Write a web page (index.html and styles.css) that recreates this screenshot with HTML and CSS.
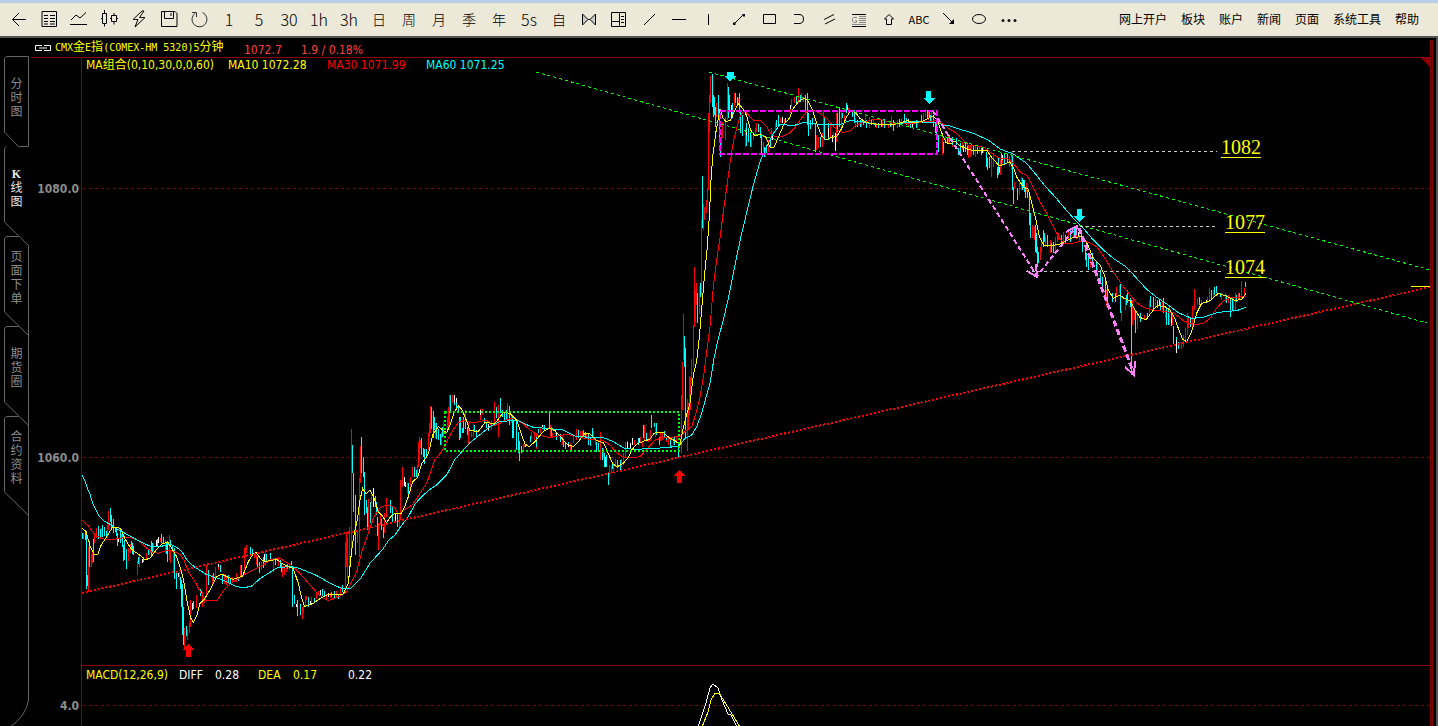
FILE: index.html
```html
<!DOCTYPE html>
<html lang="zh-CN">
<head>
<meta charset="utf-8">
<title>CMX金E指 5分钟</title>
<link rel="stylesheet" href="styles.css">
</head>
<body>
<header class="toolbar">
  <nav class="tools" aria-label="工具">
    <button class="tool" aria-label="返回"><svg class="icon" viewBox="0 0 20 20"><path d="M17 10.500H4M10 4L3.500 10.500L10 17"/></svg></button>
    <button class="tool" aria-label="报价"><svg class="icon" viewBox="0 0 20 20"><path d="M3 2.500h14.500v15H3zM5 6.500h4M11 6.500h5M5 9.500h4M11 9.500h5M5 12.500h4M11 12.500h5M5 15h4M11 15h5"/></svg></button>
    <button class="tool" aria-label="分时"><svg class="icon" viewBox="0 0 20 20"><path d="M2 11L7 6L11 9L17 3.500" stroke-width="1"/><path d="M1 15.500h17"/></svg></button>
    <button class="tool" aria-label="K线"><svg class="icon" viewBox="0 0 20 20"><path d="M3.500 4.500h4v10h-4zM5.500 1v3.500M5.500 14.500v3M12.500 6.500h5v6h-5zM15 4v2.500M15 12.500v3M2 9.500h1M11 9.500h1M18 9.500h1"/></svg></button>
    <button class="tool" aria-label="闪电下单"><svg class="icon" viewBox="0 0 20 20"><path d="M13 2L4 10.500H9L6 18L16 8.500H10.500L15 2Z"/></svg></button>
    <button class="tool" aria-label="保存"><svg class="icon" viewBox="0 0 20 20"><path d="M2.500 2.500H16L18 4.500V17.500H2.500ZM5.500 2.500V9.500H14.500V2.500M12 4v3"/></svg></button>
    <button class="tool" aria-label="刷新"><svg class="icon" viewBox="0 0 20 20"><path d="M13.500 3.500A7.500 7.500 0 1 1 6.500 4M3 3.500H7.500V8" stroke="#333"/></svg></button>
    <button class="tool">1</button><button class="tool">5</button><button class="tool">30</button><button class="tool">1h</button><button class="tool">3h</button>
    <button class="tool cjk">日</button><button class="tool cjk">周</button><button class="tool cjk">月</button><button class="tool cjk">季</button><button class="tool cjk">年</button>
    <button class="tool">5s</button><button class="tool cjk">自</button>
    <button class="tool" aria-label="复盘"><svg class="icon" viewBox="0 0 20 20"><path d="M3.500 5v11L9 10.500ZM16.500 5v11L11 10.500ZM9 10.500h2" fill="#ccc"/></svg></button>
    <button class="tool" aria-label="布局"><svg class="icon" viewBox="0 0 20 20"><path d="M2.500 3.500h14v14h-14zM10.500 3.500v14M2.500 12.500h8M12 7.500h3M12 10.500h3M12 13.500h3"/></svg></button>
    <button class="tool" aria-label="斜线"><svg class="icon" viewBox="0 0 20 20"><path d="M5 16L16 5"/></svg></button>
    <button class="tool" aria-label="水平线"><svg class="icon" viewBox="0 0 20 20"><path d="M3 10.500h14"/></svg></button>
    <button class="tool" aria-label="竖线"><svg class="icon" viewBox="0 0 20 20"><path d="M9.500 5v11"/></svg></button>
    <button class="tool" aria-label="线段"><svg class="icon" viewBox="0 0 20 20"><path d="M5.500 14.500L14.500 5.500"/><path d="M4 14l1-1l2 2l-1 1H4zM13 6l1-1h2v2l-1 1z" fill="#000" stroke="none"/></svg></button>
    <button class="tool" aria-label="矩形"><svg class="icon" viewBox="0 0 20 20"><path d="M4.500 5.500h12v9h-12z"/></svg></button>
    <button class="tool" aria-label="半圆"><svg class="icon" viewBox="0 0 20 20"><path d="M5 5.500h5q4.500 0 4.500 4.500q0 4.500-4.500 4.500H5"/></svg></button>
    <button class="tool" aria-label="平行线"><svg class="icon" viewBox="0 0 20 20"><path d="M5 10.500L15 5.500M6 15L16 10"/></svg></button>
    <button class="tool" aria-label="黄金分割"><svg class="icon" viewBox="0 0 20 20"><path d="M3 5.500h14M3 17.500h14"/><path d="M10 7.500h7M10 9.500h7M10 11.500h7M10 13.500h7M3 15.500h14M8 8.500H4.500L3.500 9.500v3L4.500 13.500H7.500V11.500H6" stroke="#888"/></svg></button>
    <button class="tool" aria-label="箭头标记"><svg class="icon" viewBox="0 0 20 20"><path d="M10 5.500L14.500 10H12.500V15.500H7.500V10H5.500Z"/></svg></button>
    <button class="tool abc">ABC</button>
    <button class="tool" aria-label="箭头线"><svg class="icon" viewBox="0 0 20 20"><path d="M4 4L14 14"/><path d="M15 10v5h-5z" fill="#000" stroke="none"/></svg></button>
    <button class="tool" aria-label="椭圆"><svg class="icon" viewBox="0 0 20 20"><ellipse cx="10" cy="10" rx="6.500" ry="4.500"/></svg></button>
    <button class="tool" aria-label="更多"><svg class="icon" viewBox="0 0 20 20"><g fill="#111" stroke="none"><circle cx="4" cy="11.500" r="1.500"/><circle cx="10" cy="11.500" r="1.500"/><circle cx="16" cy="11.500" r="1.500"/></g></svg></button>
  </nav>
  <nav class="menu" aria-label="菜单">
    <button>网上开户</button><button>板块</button><button>账户</button><button>新闻</button><button>页面</button><button>系统工具</button><button>帮助</button>
  </nav>
</header>
<div class="workspace">
  <nav class="tabs" aria-label="视图">
    <svg class="tabs-outline" viewBox="0 38 29 688"><path d="M28.500 56.500H6.500L4.500 58.500V132L18.500 146.500H28.500V56.500M6.500 146.500L4.500 148.500V222L28.500 245.500V700Q26 716 10 727M18.500 236.500H6.500L4.500 238.500V312L28.500 335.500M18.500 326.500H6.500L4.500 328.500V402L28.500 425.500M18.500 416.500H6.500L4.500 418.500V492L28.500 515.500"/></svg>
    <button class="tab"><span>分</span><span>时</span><span>图</span></button>
    <button class="tab active"><span class="latin">K</span><span>线</span><span>图</span></button>
    <button class="tab"><span>页</span><span>面</span><span>下</span><span>单</span></button>
    <button class="tab"><span>期</span><span>货</span><span>圈</span></button>
    <button class="tab"><span>合</span><span>约</span><span>资</span><span>料</span></button>
  </nav>
  <main class="chart">
    <div class="quote">
      <svg class="link-icon" viewBox="0 0 16 6"><path d="M7 .500H.500V5.500H7M9 .500H15.500V5.500H9M4 3H12"/></svg>
      <h1 class="contract">CMX<span>金</span>E<span>指</span>(COMEX-HM 5320)5<span>分钟</span></h1>
      <span class="last">1072.7</span><span class="change">1.9 / 0.18%</span>
    </div>
    <div class="legend ma"><span class="yellow">MA组合(0,10,30,0,0,60)</span><span class="yellow">MA10 1072.28</span><span class="red">MA30 1071.99</span><span class="cyan">MA60 1071.25</span></div>
    <svg class="plot" viewBox="29 72 1401 593">
      <g class="axis"><text x="79" y="193">1080.0</text><text x="79" y="462">1060.0</text></g>
      <path class="frame" d="M81.500 72V665"/>
      <path class="grid" d="M83 188.500H1430M83 457.500H1430"/>

      <g class="bars" transform="translate(80 460) scale(.33333333)">
        <path class="down" d="M8 219V236M15 210V240M20 214V386M23 345V378M29 243V320M40 238V305M56 198V238M62 208V235M68 196V230M74 202V228M80 212V232M91 145V185M95 165V205M101 178V220M107 200V216M110 206V228M113 220V258M122 213V248M128 220V262M131 256V302M134 240V300M140 268V326M155 242V268M158 250V282M161 258V286M176 290V312M190 292V305M205 268V285M214 244V284M218 250V275M232 236V258M245 222V248M250 232V250M260 250V282M263 244V305M270 240V262M276 254V272M284 265V356M290 336V386M302 350V386M304 360V440M307 372V525M310 440V555M320 498V528M341 424V448M362 388V408M386 330V374M401 340V362M422 316V336M428 345V372M446 345V368M452 354V372M476 350V362M484 316V350M512 262V288M518 268V286M533 290V320M538 306V340M550 290V325M560 282V305M572 280V304M586 295V315M600 300V324M604 308V336M622 312V328M635 302V324M637 320V442M644 404V432M652 420V468M662 432V464M686 410V440M704 414V428M728 386V408M734 392V408M755 395V412M764 394V416M776 402V418M787 374V396"/>
        <path class="up" d="M11 220V238M26 260V395M35 282V320M38 270V310M44 218V250M50 205V235M65 205V232M83 196V234M86 154V210M125 222V240M146 264V304M152 252V280M172 304V345M178 286V320M200 280V300M208 266V282M220 250V272M240 234V246M257 240V280M268 225V300M271 270V308M280 268V340M298 335V360M313 504V568M323 510V540M328 486V518M332 420V500M350 406V445M366 396V440M372 414V430M380 316V405M397 345V375M407 322V350M416 316V330M434 342V372M440 352V376M458 350V370M470 338V365M480 315V355M493 265V345M496 262V290M499 255V280M524 280V295M530 286V314M545 305V330M555 275V318M580 295V335M596 290V318M607 318V350M612 318V344M618 318V335M628 312V330M667 440V478M670 425V460M675 408V440M680 408V420M695 410V432M710 398V416M716 392V405M740 402V418M750 398V414M770 392V410M782 380V405M796 245V400M799 215V300M803 238V355M808 200V296"/>
        <path class="flat" d="M114 234V246M188 298V308M230 240V258M236 232V248M262 258V278M296 340V350M337 428V450M364 392V400M416 312V320M554 282V305M648 432V440M690 422V436M722 390V404M746 400V412"/>
      </g>
      <g class="bars" transform="translate(330 370) scale(.33333333)">
        <path class="up" d="M49 485V590M53 505V560M58 470V600M65 178V540M83 480V520M87 325V560M91 228V340M116 388V480M125 370V400M145 460V540M150 430V465M163 430V490M168 395V440M170 384V410M207 435V480M210 412V450M212 330V415M218 290V350M232 340V368M242 320V365M247 290V322M262 285V320M265 215V290M268 200V270M271 210V235M295 190V240M299 160V200M302 108V190M316 160V205M334 185V225M340 155V200M352 140V185M355 110V170M358 76V180M368 76V98M406 120V160M416 158V222M424 185V202M430 158V200M450 118V150M457 116V135M485 150V180M494 96V160M506 105V202M532 98V150M545 138V160M579 222V242M584 212V232M605 185V208M612 190V210M618 190V238M632 170V190M640 165V180M660 165V205M668 190V205M676 186V200M696 198V225M722 220V240M730 195V220M738 178V210M752 182V200M758 182V205M770 190V208M790 182V210M795 205V225M812 186V270M820 235V265M839 285V320M845 285V310M851 275V305M857 268V290M875 268V290M880 250V285M886 215V265M893 212V235M914 210V225M930 200V220M936 215V232M943 165V212M955 205V215M962 180V212M976 170V200M990 185V212M998 190V210M1008 202V215M1015 205V225M1022 205V235M1030 205V225M1040 200V215"/>
        <path class="down" d="M68 225V310M70 310V425M75 375V555M95 202V310M100 262V320M103 305V435M108 390V430M113 410V480M121 395V460M135 378V410M139 395V435M142 440V498M154 448V480M160 470V505M180 390V430M186 410V455M203 432V470M235 340V378M253 292V320M259 300V322M275 205V255M280 235V262M284 238V282M289 236V262M305 112V178M311 124V205M314 140V180M320 160V208M326 178V210M331 192V226M337 170V200M362 76V130M374 80V105M380 90V118M385 108V130M388 140V210M392 140V205M397 175V190M401 140V190M407 155V178M412 170V195M434 165V185M440 180V202M462 145V160M470 155V175M476 165V182M500 110V145M511 85V130M517 120V140M522 125V152M528 120V150M538 108V165M548 135V205M551 150V205M558 150V240M565 185V248M568 212V272M573 228V248M600 198V215M620 200V230M626 178V190M644 165V180M657 128V175M663 170V200M680 190V210M690 192V215M700 210V230M707 218V238M716 215V230M725 225V245M744 180V205M760 180V195M767 185V208M774 190V225M782 200V228M788 175V205M799 215V245M805 220V245M817 235V270M824 248V290M828 255V290M830 268V292M836 310V345M848 280V298M863 270V295M870 270V300M925 205V225M940 165V205M950 190V212M965 136V175M972 160V170M980 160V195M987 200V225M1002 182V202M1010 200V210M1022 210V235M1034 200V225M1045 220V262"/>
        <path class="flat" d="M130 355V410M197 430V455M222 322V348M227 335V350M372 76V95M378 85V100M450 120V135M474 162V180M586 222V230M638 165V172M680 188V196M716 222V232M825 262V290M892 215V235M902 220V235M908 205V225M927 205V220"/>
      </g>
      <g class="bars" transform="translate(660 60) scale(.33333333)">
        <path class="up" d="M64 1005V1180M67 905V1050M70 762V900M82 1018V1172M85 1030V1110M88 948V1065M91 950V1050M94 898V960M100 795V920M103 622V800M106 692V785M109 668V735M118 678V762M124 480V705M131 432V510M133 440V480M140 420V460M143 385V430M145 160V390M148 105V215M151 48V130M170 130V170M184 215V265M187 185V235M196 170V240M202 68V180M220 150V165M224 98V140M235 115V135M256 205V262M274 225V260M280 215V240M285 205V225M290 190V215M310 245V275M316 265V292M325 240V275M335 205V240M345 190V215M362 175V190M372 178V192M390 135V160M395 118V140M404 110V130M415 85V130M424 100V120M430 110V125M450 180V200M470 225V270M475 230V265M486 220V262M491 150V235M510 185V235M520 215V235M530 160V245M545 150V205M552 165V185M566 145V158M585 175V205M605 180V200M615 165V190M628 172V205M640 178V195M650 188V205M668 185V200M684 195V205M695 168V200M712 180V205M725 175V195M745 185V200M760 182V196M772 180V200M790 160V190M796 148V170M806 150V180M815 150V185M836 250V275M847 235V285M856 228V250M866 225V248"/>
        <path class="down" d="M55 1150V1190M73 828V920M76 865V1135M112 700V788M121 668V712M127 348V505M157 42V140M160 105V170M163 110V165M166 140V200M175 105V178M178 150V240M181 240V292M205 82V175M209 105V150M218 130V175M227 100V130M232 110V135M238 98V160M242 150V220M247 165V228M260 190V258M265 205V245M272 215V260M294 192V215M300 200V235M304 225V278M313 262V292M320 255V280M330 235V262M350 180V200M355 165V195M408 110V135M420 105V125M436 105V150M442 98V195M445 160V228M450 180V208M458 175V195M466 190V275M481 230V260M494 172V240M505 190V240M533 160V215M538 142V200M548 158V175M558 130V160M562 135V150M578 150V172M584 150V190M592 180V200M600 180V200M609 180V195M620 180V205M635 180V195M645 188V200M655 190V205M665 180V200M674 178V205M690 190V200M700 180V212M718 178V200M733 162V185M738 175V195M750 190V205M768 180V205M785 165V190M802 150V175M808 152V170M812 165V185M820 168V200M825 185V220M830 190V240M834 225V275M850 245V280M862 230V250M868 225V245"/>
        <path class="flat" d="M214 135V170M260 210V225M337 222V240M368 172V188M377 175V185M390 135V148M505 205V230M518 225V245M526 220V272M562 140V150M744 178V190M757 185V200"/>
      </g>
      <g class="bars" transform="translate(920 80) scale(.33333333)">
        <path class="up" d="M98 180V200M128 185V210M145 195V235M150 195V230M155 200V222M165 198V232M178 200V218M190 200V220M215 230V292M220 220V260M240 240V285M248 225V250M268 228V260M274 215V270M282 305V325M297 310V345M303 290V330M318 310V335M337 435V475M343 440V480M360 500V540M365 475V515M377 470V500M390 480V520M405 470V515M412 455V485M416 460V480M430 455V495M445 455V480M460 445V470M470 445V478M478 450V482M510 525V560M533 550V595M560 630V680M590 620V650M597 615V640M604 690V722M615 660V690M638 660V735M643 690V720M652 705V748M672 705V720M688 660V700M705 655V685M728 665V690M735 690V715M748 680V735M757 700V735M785 785V808M790 765V800M795 745V785M803 700V765M806 712V745M812 712V740M818 678V740M824 628V690M832 655V675M845 660V670M862 650V670M868 625V665M880 630V650M905 640V660M915 640V665M925 645V668M940 660V695M945 640V690M955 640V660M965 603V660M972 625V645"/>
        <path class="down" d="M96 172V195M108 175V195M115 205V225M122 190V220M135 185V215M142 188V225M160 198V225M173 198V222M185 200V225M198 215V262M203 235V270M207 230V265M232 262V295M235 235V285M245 218V255M252 220V255M262 222V250M276 225V330M280 320V373M292 325V360M308 295V330M312 300V335M317 325V355M321 330V355M328 335V435M332 400V475M347 435V515M350 460V520M353 500V560M356 515V550M370 450V500M374 460V485M382 465V500M395 490V515M400 485V520M425 465V490M435 465V490M450 450V485M464 440V475M485 455V485M488 470V515M495 500V540M500 520V562M505 530V570M518 520V555M528 545V575M542 570V610M548 590V625M555 600V650M562 620V675M578 640V665M585 640V665M600 612V700M618 645V675M623 630V670M630 655V680M635 660V885M646 690V760M660 700V725M682 700V715M692 648V680M700 650V690M712 660V685M722 665V690M730 655V700M738 680V735M745 690V735M754 700V738M761 738V792M768 770V795M775 785V808M812 710V740M838 650V675M874 630V660M884 622V645M888 618V640M900 640V652M918 645V670M930 650V710M937 655V690M950 645V665M958 640V660M977 605V620"/>
        <path class="flat" d="M130 195V215M188 205V218M238 262V280M247 225V240M310 300V325M475 455V470M718 660V675M755 715V730M768 780V818M860 660V668"/>
      </g>

      <g class="lines" transform="translate(80 460) scale(.33333333)">
        <polyline class="up" points="6,180 25,198 45,225 65,236 90,240 130,233 155,233 175,242 200,264 215,276 235,280 265,270 285,276 300,284 312,300 325,335 345,365 360,394 378,420 412,420 430,392 445,376 480,352 500,340 530,324 550,314 575,298 600,296 630,312 650,330 670,352 690,375 710,398 730,414 745,422 780,408 800,396 815,366 830,334 847,270"/>
        <polyline class="down" points="6,45 15,62 21,82 30,103 39,133 48,150 56,166 70,182 90,193 110,206 130,217 150,228 170,239 190,250 215,260 240,260 270,252 290,262 305,274 322,302 345,322 380,344 415,355 440,365 465,378 490,384 515,378 540,356 565,340 590,324 625,320 650,322 680,334 705,344 730,358 755,372 785,385 810,387 825,372 840,358 870,310 908,268"/>
        <polyline class="fast" points="6,205 18,214 30,258 42,282 54,282 62,258 80,230 97,203 112,202 122,206 135,236 150,262 160,272 180,286 195,300 210,294 230,268 248,250 265,248 276,266 290,290 300,320 310,358 322,428 332,474 340,486 352,462 360,430 375,415 390,390 410,350 425,342 440,350 458,358 488,348 505,305 520,280 528,278 545,300 560,304 590,298 605,310 625,320 640,326 655,370 665,415 674,440 700,430 720,416 745,403 790,402 805,370 815,270"/>
      </g>
      <g class="lines" transform="translate(330 370) scale(.33333333)">
        <polyline class="up" points="97,540 107,512 120,475 132,440 148,415 168,405 192,410 205,432 222,420 248,404 270,370 290,340 315,268 335,245 350,215 370,178 385,158 400,152 420,157 440,157 470,150 485,168 510,160 530,148 555,145 575,158 600,180 625,195 655,202 680,198 710,193 745,200 775,208 820,212 840,225 860,248 880,262 905,264 930,260 950,238 975,210 1000,203 1050,200"/>
        <polyline class="down" points="158,538 175,512 195,495 212,470 235,440 255,402 275,380 300,358 320,345 350,315 375,268 400,240 420,218 455,190 480,170 510,155 560,150 580,160 610,172 660,176 700,180 740,200 820,203 850,215 885,236 920,238 970,235 1010,233 1047,228"/>
        <polyline class="fast" points="65,540 72,495 82,450 90,390 98,355 108,372 120,360 130,378 145,425 155,435 170,458 182,440 195,430 212,432 222,415 235,380 248,335 263,322 275,280 290,262 298,240 308,195 325,170 338,180 350,188 360,165 372,128 385,108 395,118 405,140 420,182 445,184 465,158 495,160 520,127 540,130 560,150 575,195 585,222 597,230 615,215 640,184 657,175 675,182 690,198 710,222 730,230 745,215 765,190 780,192 800,212 820,218 835,250 848,282 862,290 880,280 895,262 905,240 920,222 945,212 960,208 972,190 985,187 1000,188 1020,205 1035,212 1050,225"/>
      </g>
      <g class="lines" transform="translate(660 60) scale(.33333333)">
        <polyline class="up" points="60,1130 80,1110 95,1100 108,1060 120,1010 132,940 142,860 150,800 160,680 170,600 182,520 192,440 202,370 210,310 220,245 230,205 240,170 252,152 265,165 280,182 302,182 320,200 335,225 355,233 385,222 400,208 420,180 440,155 460,150 480,160 505,180 530,210 550,217 570,212 590,195 610,188 640,178 665,180 700,190 760,190 800,185 830,182 850,192 870,208"/>
        <polyline class="down" points="57,1158 75,1135 95,1125 110,1100 125,1060 140,1005 150,970 162,895 175,835 190,780 205,715 218,650 230,590 245,520 262,450 280,375 300,305 320,260 340,220 360,193 400,197 430,188 500,195 540,193 570,182 600,184 640,192 700,193 760,185 835,188 850,195 870,198"/>
        <polyline class="fast" points="60,1155 68,1110 78,1070 90,1030 100,945 110,905 118,830 126,735 134,640 142,560 148,470 153,360 158,290 168,215 180,148 188,172 198,185 212,180 222,155 236,130 245,142 255,155 262,175 272,210 285,228 300,222 318,232 330,262 342,262 355,232 372,192 388,175 400,145 415,125 432,115 444,122 455,145 470,190 485,228 498,240 515,232 530,230 545,205 560,170 574,150 588,160 600,175 620,188 660,194 700,193 725,188 740,182 760,188 785,185 805,175 820,168 832,182 845,218 858,248 870,252"/>
      </g>
      <g class="lines" transform="translate(920 80) scale(.33333333)">
        <polyline class="up" points="90,148 105,157 125,175 145,197 170,198 195,204 215,220 240,236 262,236 280,250 300,275 322,288 340,322 360,365 380,400 400,440 415,470 432,490 455,492 475,484 505,486 530,500 548,525 570,560 590,590 610,620 630,645 650,668 670,682 700,690 760,698 790,722 820,735 850,730 870,715 890,685 910,662 930,652 955,652 978,648"/>
        <polyline class="down" points="90,138 120,148 160,160 205,180 240,207 280,222 320,250 345,280 375,318 400,345 430,380 465,420 490,445 520,480 550,510 580,535 620,562 650,595 680,628 710,652 740,672 775,698 815,715 850,712 890,698 920,694 950,692 978,682"/>
        <polyline class="fast" points="90,192 105,183 120,198 145,208 165,213 200,210 215,232 238,258 255,252 268,245 280,262 292,295 310,320 325,328 338,380 348,420 358,470 370,495 390,498 420,492 440,482 460,472 490,470 505,498 520,535 540,555 555,590 565,630 580,655 600,645 612,655 630,662 645,690 660,712 678,720 692,700 712,676 735,680 750,690 762,710 775,745 788,778 800,785 815,755 830,700 845,670 870,662 895,640 918,648 945,662 965,658 978,640"/>
      </g>

      <path class="support" d="M82 593L1430 287"/>
      <path class="channel" d="M709 72L1430 270M536 72L1427 323"/>
      <path class="range-low" d="M445 412H679V451H445Z"/>
      <path class="range-high" d="M720 111H937V154H720Z"/>
      <path class="level" d="M1012 151.500H1217M1080 226.500H1216M1026 271.500H1221"/>
      <g class="wave">
        <path class="thin" d="M933 111L1037 276L1076 227"/>
        <path class="thick" d="M1079 228L1134 374"/>
        <path class="head" d="M1027 271L1037 277L1036 264M1066 232L1077 226L1075 238M1125 367L1134 375L1135 361"/>
      </g>
      <path class="sell" d="M727 72h7v4h3l-7 5l-6-5h3zM926 91h5v7h4l-6 6l-6-6h3zM1077 209h5v7h3l-6 6l-6-6h4z"/>
      <path class="buy" d="M679 470l6 6h-3v7h-5v-7h-4zM188 644l6 6h-3v7h-5v-7h-4z"/>
      <path class="last-mark" d="M1411 286.500H1430"/>
      <g class="targets"><text x="1221" y="154">1082</text><text x="1225" y="229">1077</text><text x="1225" y="274">1074</text><path d="M1221 157.500h40M1225 232.500h40M1225 277.500h40"/></g>
    </svg>
    <section class="macd">
      <div class="legend osc"><span class="yellow">MACD(12,26,9)</span><span>DIFF</span><span>0.28</span><span class="yellow">DEA</span><span class="yellow">0.17</span><span>0.22</span></div>
      <svg class="plot" viewBox="29 684 1401 42">
        <g class="axis"><text x="79" y="710">4.0</text></g>
        <path class="frame" d="M81.500 684V726"/>
        <path class="grid" d="M83 705.500H1430"/>
        <polyline class="diff" points="698,727 702,715 706,703 710,688 713,684 718,688 722,700 728,714 731,715 737,727"/>
        <polyline class="dea" points="702,727 708,712 711,700 715,693 719,693 726,704 732,714 740,727"/>
      </svg>
    </section>
    <svg class="corner" viewBox="0 0 10 10"><path d="M0 0H10V10Z"/></svg>
  </main>
  <aside class="rail"><div class="track"></div></aside>
</div>
</body>
</html>
```
FILE: styles.css
```css
* { box-sizing: border-box; }
body {
  margin: 0;
  background: #000;
  color: #fff;
  font: 12px/14px "DejaVu Sans Condensed", "Noto Sans", "Noto Sans CJK SC", sans-serif;
  overflow: hidden;
}
button {
  padding: 0;
  border: 0;
  background: none;
  color: inherit;
  font: inherit;
}
.toolbar {
  display: flex;
  justify-content: space-between;
  height: 38px;
  padding: 0 19px 0 4px;
  border-top: 3px solid #b8cfea;
  border-bottom: 2px solid #555;
  background: #ece9d8;
  color: #000;
  white-space: nowrap;
}
.tools, .menu { display: flex; align-items: center; padding-bottom: 2px; }
.tool {
  display: flex;
  align-items: center;
  justify-content: center;
  width: 30px;
  height: 31px;
  font: 300 16px/20px "Noto Sans CJK SC", sans-serif;
}
.tool.cjk { font-size: 14px; }
.tool.abc { font: 11px/20px "Noto Sans CJK SC", sans-serif; }
.icon { width: 20px; height: 20px; fill: none; stroke: #000; }
.menu { gap: 14px; font-family: "Noto Sans CJK SC", sans-serif; }
.workspace { display: flex; }
.tabs { position: relative; flex: none; width: 29px; padding-top: 18px; }
.tabs-outline { position: absolute; top: 0; left: 0; width: 29px; fill: none; stroke: #666; }
.tab {
  position: relative;
  display: flex;
  flex-direction: column;
  align-items: center;
  justify-content: center;
  width: 29px;
  height: 90px;
  padding: 0 0 6px 4px;
  color: #8c8c8c;
  font-family: "Liberation Sans", "Noto Sans CJK SC", sans-serif;
}
.tab span { height: 14px; }
.tab.active { color: #e8e8e8; }
.latin { font-family: "Liberation Serif", serif; font-weight: bold; }
.chart { position: relative; flex: 1; min-width: 0; }
.quote {
  display: flex;
  align-items: center;
  height: 20px;
  margin-left: 2px;
  padding-left: 4px;
  border-bottom: 1px solid #8b0000;
  white-space: nowrap;
}
.link-icon { width: 16px; height: 6px; margin-right: 4px; fill: none; stroke: #fff; }
.contract {
  width: 189px;
  margin: 0;
  color: #ff0;
  font: 10px/16px "DejaVu Sans Mono", monospace;
}
.contract span { font: 12px/16px "Liberation Sans", "Noto Sans CJK SC", sans-serif; }
.last, .change { padding-top: 4px; color: #ff4040; }
.last { width: 57px; }
.legend {
  display: grid;
  align-items: center;
  margin-left: 52px;
  padding-left: 4px;
  border-left: 1px solid #8b0000;
  white-space: nowrap;
}
.ma { grid-template-columns: 142px 99px 99px auto; height: 14px; }
.osc { grid-template-columns: 93px 36px 43px 35px 55px auto; height: 19px; border-top: 1px solid #8b0000; }
.yellow { color: #ff0; }
.red { color: #f00; }
.cyan { color: #0ff; }
.plot { display: block; width: 100%; fill: none; shape-rendering: crispEdges; }
.plot text { stroke: none; }
.axis { fill: #8c8c8c; font-weight: bold; text-anchor: end; }
.frame { stroke: #8b0000; }
.grid { stroke: #8b0000; stroke-dasharray: 3 3; }
.bars, .lines { stroke-width: 3; }
.up { stroke: #f00; }
.down { stroke: #0ff; }
.flat { stroke: #fff; }
.fast { stroke: #ff0; }
.support { stroke: #f00; stroke-width: 2; stroke-dasharray: 2 2; }
.channel { stroke: #0f0; stroke-dasharray: 3 3; }
.range-low { stroke: #0f0; stroke-width: 2; stroke-dasharray: 2 2; }
.range-high { stroke: #f0f; stroke-width: 2; stroke-dasharray: 6 2; }
.level { stroke: #ccc; stroke-dasharray: 3 3; }
.wave { stroke: #ff80ff; stroke-width: 2; }
.thin { stroke-dasharray: 5 3; }
.thick { stroke-width: 3; stroke-dasharray: 6 3; }
.sell { fill: #0ff; }
.buy { fill: #f00; }
.last-mark { stroke: #ff0; }
.targets { fill: #ff0; stroke: #ff0; font: 20px "Liberation Serif", serif; }
.diff { stroke: #fff; }
.dea { stroke: #ff0; }
.corner { position: absolute; top: 19px; right: 0; width: 10px; height: 10px; fill: #8b0000; }
.rail { flex: none; width: 8px; padding-top: 2px; border-right: 2px solid #555; display: flex; }
.track { width: 3px; border: 1px solid #8b0000; border-bottom: 0; }
```
